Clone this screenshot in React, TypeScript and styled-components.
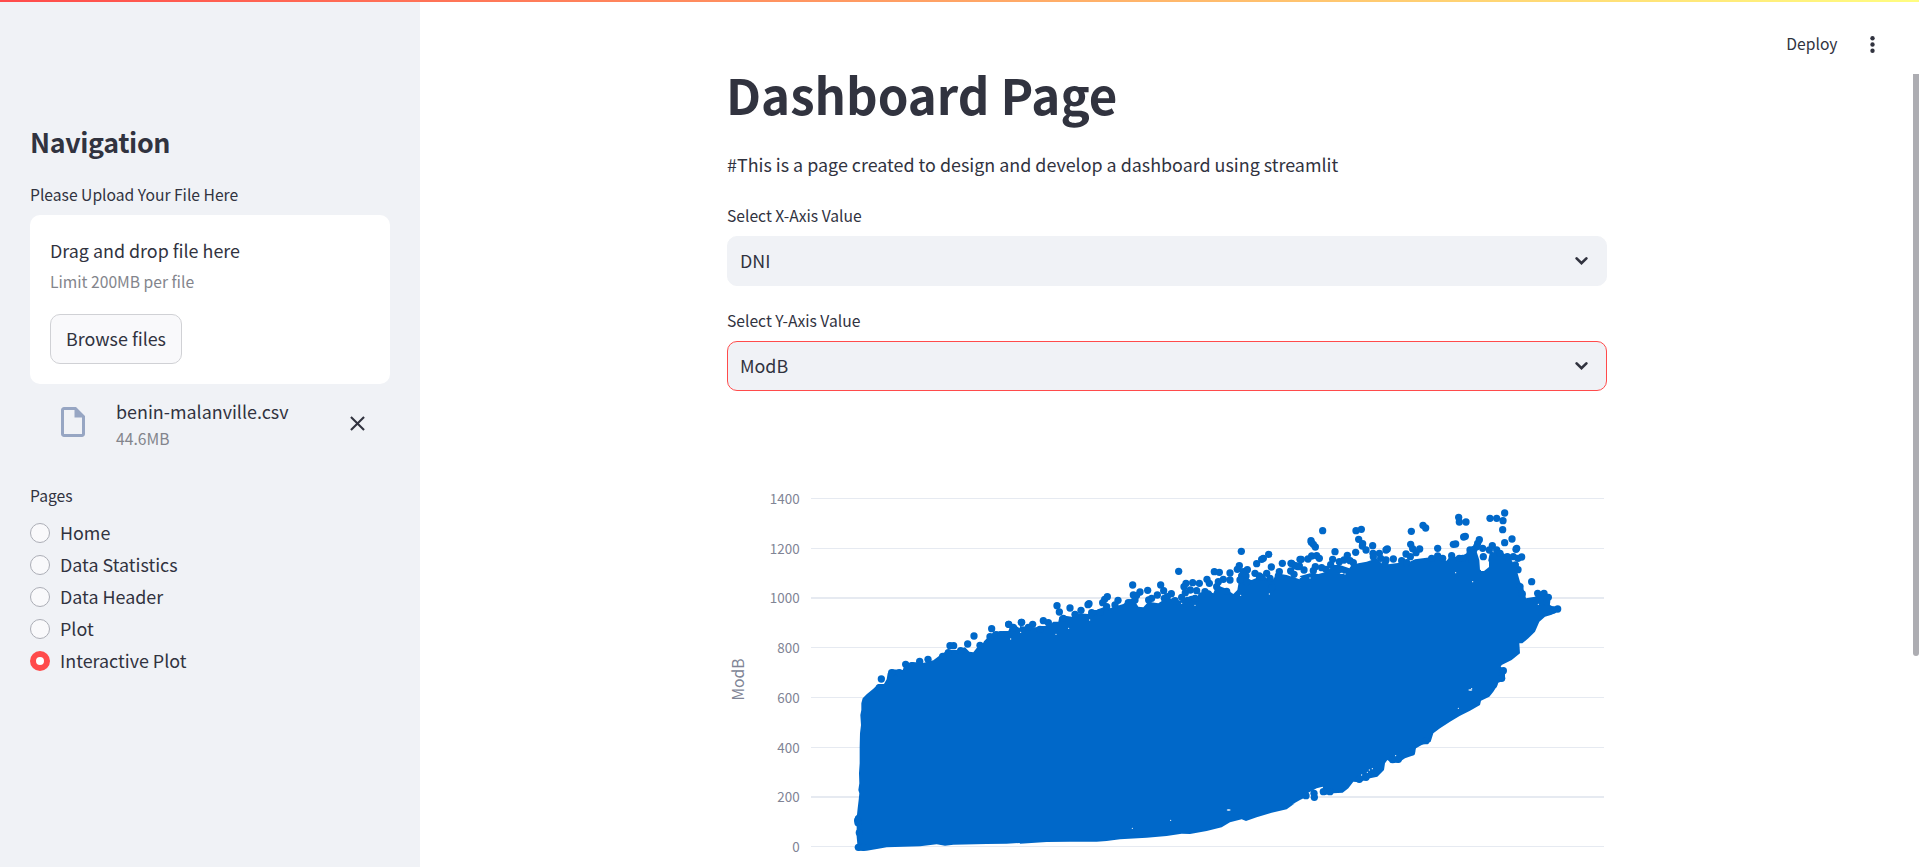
import React from "react";
import styled, { createGlobalStyle } from "styled-components";

const ink = "#31333f";
const muted = "#83858c";
const panel = "#f0f2f6";
const primary = "#ff4b4b";
const dotBlue = "#0068c9";
const fontStack = '"Noto Sans CJK SC", "Noto Sans", sans-serif';

const GlobalStyle = createGlobalStyle`
  * { box-sizing: border-box; }
  body {
    margin: 0;
    background: #ffffff;
    color: ${ink};
    font-family: ${fontStack};
    overflow: hidden;
  }
`;

const Page = styled.div`
  position: relative;
  display: flex;
  width: 100%;
  height: 867px;
  overflow: hidden;
`;

const Decoration = styled.div`
  position: absolute;
  top: 0;
  left: 0;
  right: 0;
  height: 2px;
  background: linear-gradient(90deg, #ff4b4b, #fffd80);
`;

const ScrollThumb = styled.div`
  position: absolute;
  top: 74px;
  right: 0;
  width: 6px;
  height: 582px;
  border-radius: 0 0 3px 3px;
  background: #adadb2;
`;

const Sidebar = styled.aside`
  flex: 0 0 420px;
  padding: 124px 30px 0;
  background: ${panel};
`;

const SidebarTitle = styled.h2`
  margin: 0 0 24px;
  font-size: 26.8px;
  line-height: 36px;
  font-weight: 700;
  letter-spacing: -0.35px;
`;

const Label = styled.div<{ $top?: number; $bottom?: number }>`
  margin: ${(p) => p.$top ?? 0}px 0 ${(p) => p.$bottom ?? 9}px;
  font-size: 15.67px;
  line-height: 22px;
`;

const DropZone = styled.section`
  height: 169px;
  padding: 20px;
  border-radius: 10px;
  background: #ffffff;
`;

const BodyText = styled.div<{ $line: number }>`
  font-size: 17.9px;
  line-height: ${(p) => p.$line}px;
  white-space: nowrap;
`;

const Caption = styled.div<{ $line: number; $top?: number }>`
  margin-top: ${(p) => p.$top ?? 0}px;
  color: ${muted};
  font-size: 15.67px;
  line-height: ${(p) => p.$line}px;
`;

const BrowseButton = styled.button`
  display: block;
  width: 132px;
  height: 50px;
  margin-top: 19px;
  padding: 0 0 2px;
  border: 1px solid #d0d1d5;
  border-radius: 10px;
  background: #f9f9fb;
  color: ${ink};
  font-family: inherit;
  font-size: 17.9px;
  white-space: nowrap;
`;

const FileRow = styled.div`
  display: flex;
  align-items: flex-start;
  height: 70px;
  padding: 13px 20px 0 25px;
`;

const FileIconBox = styled.div`
  display: flex;
  margin: 7px 25px 0 0;
`;

const FileMeta = styled.div`
  flex: 1;
`;

const RemoveButton = styled.button`
  display: flex;
  margin: 14px 0 0;
  padding: 0;
  border: 0;
  background: none;
`;

const RadioRow = styled.label`
  display: flex;
  align-items: center;
  gap: 10px;
  height: 32px;
`;

const RadioDot = styled.span<{ $checked: boolean }>`
  flex: none;
  width: 20px;
  height: 20px;
  border-radius: 50%;
  border: ${(p) => (p.$checked ? `6px solid ${primary}` : "1px solid #acaeb6")};
  background: ${(p) => (p.$checked ? "#ffffff" : "#f9f9fb")};
`;

const RadioText = styled.span`
  padding-bottom: 2px;
  font-size: 17.9px;
  line-height: 30px;
`;

const Main = styled.main`
  flex: 1;
  display: flex;
  flex-direction: column;
  align-items: center;
`;

const Toolbar = styled.header`
  display: flex;
  align-self: stretch;
  justify-content: flex-end;
  align-items: flex-start;
  gap: 22.5px;
  height: 64px;
  padding: 32px 34px 0 0;
`;

const Deploy = styled.span`
  margin-top: 1px;
  font-size: 15.67px;
  line-height: 22px;
`;

const Content = styled.div`
  width: 880px;
  margin-right: 5px;
`;

const Title = styled.h1`
  margin: 0 0 0 -1px;
  font-size: 49.2px;
  line-height: 60px;
  font-weight: 700;
  white-space: nowrap;
`;

const Intro = styled.p`
  margin: 24px 0 25px;
  font-size: 17.9px;
  line-height: 32px;
  white-space: nowrap;
`;

const Select = styled.div<{ $active?: boolean }>`
  display: flex;
  align-items: center;
  justify-content: space-between;
  height: 50px;
  padding: 0 17px 2px 12px;
  border: 1px solid ${(p) => (p.$active ? primary : panel)};
  border-radius: 10px;
  background: ${panel};
`;

const Chart = styled.svg`
  display: block;
  margin-top: 79px;
  font-family: ${fontStack};
`;

const FileIcon = () => (
  <svg width="36" height="36" viewBox="0 0 24 24" fill="#97a6c3">
    <path d="M14 2H6c-1.1 0-1.99.9-1.99 2L4 20c0 1.1.89 2 1.99 2H18c1.1 0 2-.9 2-2V8l-6-6zM6 20V4h7v5h5v11H6z" />
  </svg>
);

const CloseIcon = () => (
  <svg width="25" height="25" viewBox="0 0 24 24" fill={ink}>
    <path d="M19 6.41 17.59 5 12 10.59 6.41 5 5 6.41 10.59 12 5 17.59 6.41 19 12 13.41 17.59 19 19 17.59 13.41 12z" />
  </svg>
);

const ChevronIcon = () => (
  <svg width="15" height="14" viewBox="0 0 15 14" fill="none">
    <path d="M2.6 5.4 7.5 10.2 12.4 5.4" stroke={ink} strokeWidth="2.7" strokeLinecap="round" />
  </svg>
);

const MenuIcon = () => (
  <svg width="25" height="25" viewBox="0 0 24 24" fill={ink}>
    <circle cx="12" cy="6" r="2.1" />
    <circle cx="12" cy="12" r="2.1" />
    <circle cx="12" cy="18" r="2.1" />
  </svg>
);

type Segment = { x: number; y: number; pts: string };

/* Point lists are stored per tile, in thirds of a pixel from the tile's origin. */
const outline: Segment[] = [
  { x: -7, y: 10, pts: "405,1102 412,1092 410,1070 410,1037 404,1025 405,1010 411,1004 413,985 416,960 418,940 415,930 418,910 417,880 419,850 419,800 420,760 423,735 421,705 424,690 424,670 428,655 440,643 460,626 475,612 492,612 500,598 503,580 515,568 548,570 552,560 575,546 612,548 640,541 665,522 685,510 710,510 735,502 748,515 760,517 770,504 785,497 792,484 805,470 822,456 850,453 865,453 872,437 885,435 899,445" },
  { x: 273, y: 50, pts: "60,318 90,322 108,322 120,318 145,318 160,305 175,305 178,290 200,288 215,290 235,280 265,282 275,270 290,270 310,262 330,265 350,258 370,252 388,238 400,236 415,260 430,262 445,245 475,250 490,240 505,238 520,235 540,242 560,230 585,230 600,225 615,210 640,220 650,195 675,205 700,222 712,210 718,175 735,175 755,180 790,165 805,180 820,178 830,160 860,165 890,175 899,178" },
  { x: 563, y: 20, pts: "30,258 60,250 85,252 110,245 130,225 150,225 178,235 185,225 205,220 230,215 260,205 280,225 300,222 330,218 350,220 375,208 410,203 440,200 470,212 480,198 490,200 510,200 530,190 560,185 568,210 570,240 590,235 600,185 640,190 660,200 680,240 690,275 700,295 708,325 735,320 745,312 778,312 780,345 790,350 803,350 805,364 785,374 765,380 748,395 735,425 715,445 697,460 688,460 690,490 665,510 635,525 632,530 645,540 645,570 625,578 620,592 610,600" },
  { x: 563, y: 200, pts: "625,42 610,65 598,80 573,92 570,105 540,122 510,137 480,155 450,175 430,190 422,215 405,222 395,225 378,235 373,255 345,265 325,278 305,278 292,270 285,280 282,300 262,320 240,325 208,337 190,335 175,355 158,368 130,370 105,375 98,350 80,355 55,368 50,380 30,390 5,404" },
  { x: 273, y: 50, pts: "885,850 860,868 815,878 770,892 738,903 725,898 690,907 665,922 620,933 570,942 545,941 500,948 440,953 360,958 320,963 290,965 210,965 140,966 60,971" },
  { x: -7, y: 10, pts: "899,1089 860,1091 800,1092 700,1094 675,1097 650,1093 600,1099 500,1102 475,1106 440,1112 415,1112" },
];

const marks: Segment[] = [
  { x: -7, y: 10, pts: "484,597 557,553 599,544 624,538 690,497 701,497 743,492 762,468 815,446 866,433 905,427 478,623 515,578 538,578 575,557 668,529 685,518 722,512 780,496 810,470 828,464 843,464 880,442 413,1021 414,1028 415,1102 430,1102 418,1058" },
  { x: 273, y: 50, pts: "26,313 64,307 98,313 130,302 145,308 171,257 178,276 210,264 225,283 243,271 267,251 264,254 308,248 314,238 322,230 354,241 398,195 400,225 420,216 410,226 443,211 446,240 472,225 482,195 491,212 493,235 514,221 502,230 536,154 558,190 552,200 578,188 598,190 590,212 571,210 621,178 575,238 585,235 643,155 658,157 655,185 690,159 670,178 690,180 680,214 718,137 712,148 724,94 742,149 730,155 738,168 725,168 770,131 785,118 790,115 806,103 765,160 778,168 814,141 800,160 847,130 873,130 883,136 838,155 872,153 882,163 900,118 895,140 40,325 85,322 120,328 190,295 275,278 300,277 320,260 345,255 385,248 405,240 455,235 525,242 545,232 556,218 615,215 628,190 650,200 720,180 740,185 785,172 810,175 835,168 815,203 625,222 605,228" },
  { x: 563, y: 20, pts: "98,122 63,152 64,157 70,163 76,171 135,185 34,208 54,207 65,198 80,197 88,205 76,230 70,242 95,233 42,240 5,220 18,228 28,228 108,238 128,208 122,224 148,215 172,196 162,210 180,212 190,218 197,187 198,122 214,118 206,148 218,161 217,168 228,180 248,167 249,190 250,200 268,190 288,180 292,177 288,210 310,207 272,205 285,222 335,212 350,218 364,124 362,163 368,176 378,188 389,177 348,192 361,200 399,106 407,114 443,175 443,198 425,205 458,205 485,197 490,163 497,162 506,82 508,96 528,96 521,141 526,139 540,180 540,192 552,178 568,149 563,160 560,170 578,175 580,200 518,205 508,205 545,210 600,85 620,85 644,69 639,92 638,119 644,158 666,147 678,178 680,175 695,201 684,205 684,239 676,225 607,167 598,180 620,180 630,190 652,200 670,200 725,275 743,310 762,310 775,322 770,335 803,357 790,360 697,312 690,290 640,542 635,565" },
  { x: 563, y: 200, pts: "72,370 73,382 100,365 120,365 308,269 325,268 408,212 365,245 228,322 208,328 48,377" },
];

const gaps: Segment[] = [
  { x: 273, y: 50, pts: "686,870 269,300 206,325 168,343 62,337 397,925 512,901 32,357 808,222 585,256 545,250 722,226" },
  { x: 563, y: 20, pts: "155,250 165,252 548,275 497,248 60,264 22,243 32,262 745,343" },
  { x: 563, y: 200, pts: "238,300 247,296 232,307 545,56 541,60 317,257 505,115 215,315" },
];

const resolve = (segments: Segment[]) =>
  segments.flatMap((s) =>
    s.pts.split(" ").map((pair) => {
      const [px, py] = pair.split(",").map(Number);
      return [s.x + px / 3, s.y + py / 3] as const;
    })
  );

const ticks = [
  { value: 1400, y: 28, h: 1 },
  { value: 1200, y: 78, h: 1 },
  { value: 1000, y: 127, h: 2 },
  { value: 800, y: 177, h: 1 },
  { value: 600, y: 227, h: 1 },
  { value: 400, y: 277, h: 1 },
  { value: 200, y: 326, h: 2 },
  { value: 0, y: 376, h: 1 },
];

const ScatterChart = () => (
  <Chart width="880" height="397" viewBox="0 0 880 397">
    {ticks.map((t) => (
      <g key={t.value}>
        <rect x="84" y={t.y} width="793" height={t.h} fill="#e6eaf1" />
        <text x="72.6" y={t.y + 6} textAnchor="end" fontSize="13.4" fill="#808495">
          {t.value}
        </text>
      </g>
    ))}
    <text transform="translate(17 209.5) rotate(-90)" textAnchor="middle" fontSize="15.67" fill="#808495">
      ModB
    </text>
    <polygon fill={dotBlue} points={resolve(outline).map((p) => p.join(",")).join(" ")} />
    <polygon points="753,90 759,87 762,92 762,97 757,101 754,101" fill="#ffffff" />
    {resolve(gaps).map(([x, y], i) => (
      <ellipse key={i} cx={x} cy={y} rx={i % 12 === 0 ? 2 : 0.6} ry="0.7" fill="#ffffff" />
    ))}
    <g fill={dotBlue}>
      {resolve(marks).map(([x, y], i) => (
        <circle key={i} cx={x} cy={y} r="3.65" />
      ))}
    </g>
  </Chart>
);

const pages = ["Home", "Data Statistics", "Data Header", "Plot", "Interactive Plot"];

export default function App() {
  return (
    <Page>
      <GlobalStyle />
      <Sidebar>
        <SidebarTitle>Navigation</SidebarTitle>
        <Label>Please Upload Your File Here</Label>
        <DropZone>
          <BodyText $line={30}>Drag and drop file here</BodyText>
          <Caption $line={26} $top={4}>Limit 200MB per file</Caption>
          <BrowseButton>Browse files</BrowseButton>
        </DropZone>
        <FileRow>
          <FileIconBox>
            <FileIcon />
          </FileIconBox>
          <FileMeta>
            <BodyText $line={28}>benin-malanville.csv</BodyText>
            <Caption $line={24} $top={2}>44.6MB</Caption>
          </FileMeta>
          <RemoveButton aria-label="Remove file">
            <CloseIcon />
          </RemoveButton>
        </FileRow>
        <Label $top={31} $bottom={10}>Pages</Label>
        {pages.map((name) => (
          <RadioRow key={name}>
            <RadioDot $checked={name === "Interactive Plot"} />
            <RadioText>{name}</RadioText>
          </RadioRow>
        ))}
      </Sidebar>
      <Main>
        <Toolbar>
          <Deploy>Deploy</Deploy>
          <MenuIcon />
        </Toolbar>
        <Content>
          <Title>Dashboard Page</Title>
          <Intro>#This is a page created to design and develop a dashboard using streamlit</Intro>
          <Label>Select X-Axis Value</Label>
          <Select>
            <BodyText $line={30}>DNI</BodyText>
            <ChevronIcon />
          </Select>
          <Label $top={24}>Select Y-Axis Value</Label>
          <Select $active>
            <BodyText $line={30}>ModB</BodyText>
            <ChevronIcon />
          </Select>
          <ScatterChart />
        </Content>
      </Main>
      <Decoration />
      <ScrollThumb />
    </Page>
  );
}
